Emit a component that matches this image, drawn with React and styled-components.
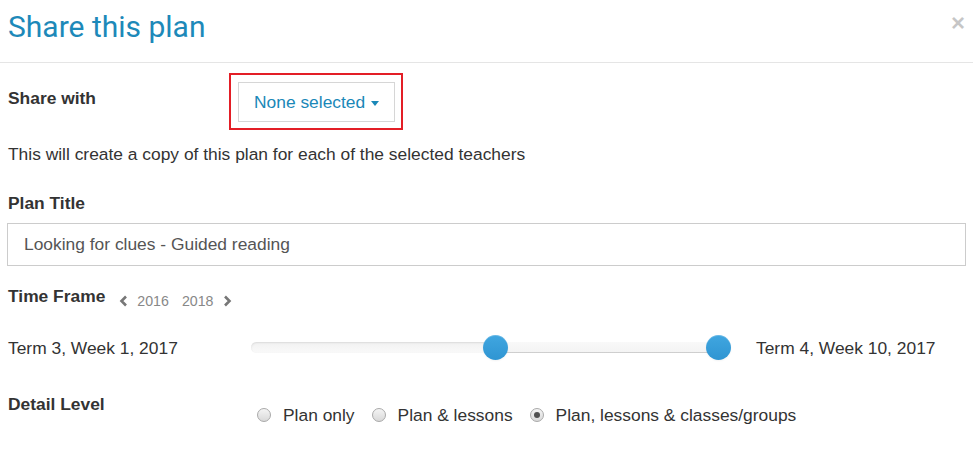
import React from 'react'
import styled, { createGlobalStyle } from 'styled-components'

const GlobalStyle = createGlobalStyle`
  html, body {
    margin: 0;
    padding: 0;
    background: #fff;
  }
  body {
    font-family: "Liberation Sans", Arial, sans-serif;
    font-size: 17.4px;
    color: #333;
  }
`

const Modal = styled.div`
  width: 973px;
  height: 450px;
  background: #fff;
  overflow: hidden;
`

const Header = styled.header`
  box-sizing: border-box;
  height: 63px;
  padding: 10px 8px 0 8px;
  border-bottom: 1px solid #e5e5e5;
  display: flex;
  justify-content: space-between;
  align-items: flex-start;
`

const Title = styled.h4`
  margin: 0;
  font-family: Roboto, "Noto Sans", sans-serif;
  font-weight: 400;
  font-size: 30px;
  line-height: 33px;
  color: #1d89b9;
`

const Close = styled.button`
  margin-top: 1px;
  padding: 0;
  border: 0;
  background: none;
  font-family: "Liberation Sans", Arial, sans-serif;
  font-size: 24px;
  font-weight: 700;
  line-height: 1;
  color: #000;
  opacity: 0.22;
  cursor: pointer;
`

const Body = styled.div`
  padding: 0 7px;
`

const Row = styled.div`
  display: flex;
  align-items: flex-start;
  margin-top: ${p => p.$top || 0}px;
`

const Label = styled.div`
  flex: 0 0 auto;
  width: ${p => (p.$width ? `${p.$width}px` : 'auto')};
  padding-left: 1px;
  padding-top: ${p => p.$pad || 0}px;
  font-weight: 700;
  line-height: 20px;
  color: #333;
`

const Highlight = styled.div`
  border: 2px solid #e31e26;
  padding: 7px 6px 6px 7px;
`

const DropdownButton = styled.button`
  box-sizing: border-box;
  height: 40px;
  padding: 0 15px 0 15px;
  display: flex;
  align-items: center;
  background: #fff;
  border: 1px solid #d6d6d6;
  font-family: "Liberation Sans", Arial, sans-serif;
  font-size: 17.4px;
  color: #1a88b8;
  cursor: pointer;
`

const Caret = styled.span`
  display: inline-block;
  width: 0;
  height: 0;
  margin-left: 6px;
  margin-top: 2px;
  border-top: 5px solid #1a88b8;
  border-left: 4px solid transparent;
  border-right: 4px solid transparent;
`

const Help = styled.p`
  margin: 14px 0 0;
  padding-left: 1px;
  line-height: 20px;
  color: #333;
`

const TextInput = styled.input`
  box-sizing: border-box;
  display: block;
  width: 100%;
  height: 43px;
  margin-top: 10px;
  padding: 0 16px;
  border: 1px solid #ccc;
  font-family: "Liberation Sans", Arial, sans-serif;
  font-size: 17.4px;
  color: #555;
  outline: none;
`

const TimeHeader = styled.div`
  display: flex;
  align-items: flex-start;
  height: 20px;
  margin-top: 20px;
`

const YearNav = styled.div`
  display: flex;
  align-items: center;
  margin-top: 8px;
  margin-left: 14px;
  height: 14px;
  font-size: 14.2px;
  color: #888;
`

const Year = styled.span`
  margin: ${p => p.$margin};
`

const Chevron = ({ dir }) => (
  <svg width="9" height="12" viewBox="0 0 9 12">
    <path
      d={dir === 'left' ? 'M7 1.5 L2.5 6 L7 10.5' : 'M2 1.5 L6.5 6 L2 10.5'}
      fill="none"
      stroke="#777"
      strokeWidth="2.6"
    />
  </svg>
)

const SliderRow = styled.div`
  display: flex;
  align-items: center;
  height: 25px;
  margin-top: 29px;
`

const TermText = styled.span`
  flex: 0 0 auto;
  width: ${p => (p.$width ? `${p.$width}px` : 'auto')};
  padding-left: ${p => p.$pad || 0}px;
  line-height: 20px;
  color: #333;
`

const Track = styled.div`
  position: relative;
  flex: 0 0 480px;
  height: 11px;
  border-radius: 6px;
  background: linear-gradient(#f2f2f2, #f9f9f9);
  box-shadow: inset 0 1px 2px rgba(0, 0, 0, 0.1);
`

const Selection = styled.div`
  position: absolute;
  top: 0;
  bottom: 0;
  background: linear-gradient(#f9f9f9, #f3f3f3);
  box-shadow: inset 0 -1px 0 rgba(0, 0, 0, 0.15);
`

const Handle = styled.div`
  position: absolute;
  top: 50%;
  width: 25px;
  height: 25px;
  margin: -12.5px 0 0 -12.5px;
  border-radius: 50%;
  background: linear-gradient(#40a6e0, #2f95d2);
  box-shadow: inset 0 1px 0 rgba(255, 255, 255, 0.2), 0 1px 2px rgba(0, 0, 0, 0.05);
`

const RadioGroup = styled.div`
  display: flex;
  align-items: center;
  margin-top: 11px;
`

const RadioItem = styled.label`
  display: flex;
  align-items: center;
  margin-right: 17px;
  line-height: 20px;
  color: #333;
  cursor: pointer;
`

const RadioDot = styled.span`
  box-sizing: border-box;
  display: inline-flex;
  align-items: center;
  justify-content: center;
  width: 14px;
  height: 14px;
  margin-right: 12px;
  border-radius: 50%;
  border: 1px solid #a9a9a9;
  background: linear-gradient(#f4f4f4, #d9d9d9);

  &::after {
    content: '';
    display: ${p => (p.$checked ? 'block' : 'none')};
    width: 6px;
    height: 6px;
    border-radius: 50%;
    background: #505050;
  }
`

const range = { start: 0.51, end: 0.973 }
const levels = ['Plan only', 'Plan & lessons', 'Plan, lessons & classes/groups']

export default function App() {
  const [level, setLevel] = React.useState(2)

  return (
    <Modal>
      <GlobalStyle />
      <Header>
        <Title>Share this plan</Title>
        <Close aria-label="Close">×</Close>
      </Header>
      <Body>
        <Row $top={10}>
          <Label $width={221} $pad={15}>Share with</Label>
          <Highlight>
            <DropdownButton>
              None selected
              <Caret />
            </DropdownButton>
          </Highlight>
        </Row>
        <Help>This will create a copy of this plan for each of the selected teachers</Help>

        <Row $top={29}>
          <Label>Plan Title</Label>
        </Row>
        <TextInput defaultValue="Looking for clues - Guided reading" />

        <TimeHeader>
          <Label>Time Frame</Label>
          <YearNav>
            <Chevron dir="left" />
            <Year $margin="0 13px 0 9px">2016</Year>
            <Year $margin="0 10px 0 0">2018</Year>
            <Chevron dir="right" />
          </YearNav>
        </TimeHeader>

        <SliderRow>
          <TermText $width={243} $pad={1}>Term 3, Week 1, 2017</TermText>
          <Track>
            <Selection
              style={{
                left: `${range.start * 100}%`,
                width: `${(range.end - range.start) * 100}%`
              }}
            />
            <Handle style={{ left: `${range.start * 100}%` }} />
            <Handle style={{ left: `${range.end * 100}%` }} />
          </Track>
          <TermText $pad={25}>Term 4, Week 10, 2017</TermText>
        </SliderRow>

        <Row $top={34}>
          <Label $width={249}>Detail Level</Label>
          <RadioGroup>
            {levels.map((text, i) => (
              <RadioItem key={text} onClick={() => setLevel(i)}>
                <RadioDot $checked={level === i} />
                {text}
              </RadioItem>
            ))}
          </RadioGroup>
        </Row>
      </Body>
    </Modal>
  )
}
